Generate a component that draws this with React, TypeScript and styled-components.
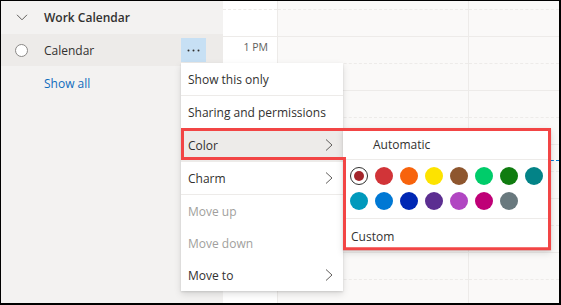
import React from "react";
import styled, { createGlobalStyle } from "styled-components";

const GlobalStyle = createGlobalStyle`
  html, body { margin: 0; padding: 0; background: #ffffff; }
  body { font-family: "Open Sans", "Noto Sans", sans-serif; }
`;

const FONT = `"Open Sans", "Noto Sans", sans-serif`;
const LINE = "#edebe9";

const Frame = styled.div`
  position: relative;
  width: 561px;
  height: 305px;
  box-sizing: border-box;
  border-style: solid;
  border-color: #000;
  border-width: 1px 2px 2px 1px;
  display: flex;
  overflow: hidden;
  font-family: ${FONT};
  color: #323130;
`;

const Sidebar = styled.aside`
  width: 222px;
  flex: none;
  background: #f3f2f1;
  display: flex;
  flex-direction: column;
`;

const GroupHeader = styled.div`
  height: 33px;
  display: flex;
  align-items: center;
  padding-left: 15px;
  font-size: 12px;
  font-weight: 600;
  svg { margin-right: 16px; }
`;

const CalendarRow = styled.div`
  height: 32px;
  display: flex;
  align-items: center;
  padding-left: 14px;
  background: #edebe9;
  font-size: 12px;
`;

const Radio = styled.span`
  width: 13px;
  height: 13px;
  box-sizing: border-box;
  border-radius: 50%;
  border: 1px solid #8a8886;
  background: #ffffff;
  margin-right: 16px;
`;

const MoreButton = styled.span`
  margin-left: auto;
  margin-right: 17px;
  width: 25px;
  height: 24px;
  background: #c7e0f4;
  display: flex;
  align-items: center;
  justify-content: center;
`;

const ShowAll = styled.div`
  height: 35px;
  display: flex;
  align-items: center;
  padding-left: 43px;
  font-size: 12px;
  color: #0f6cbd;
`;

const TimeColumn = styled.div`
  width: 55px;
  flex: none;
  box-sizing: border-box;
  border-right: 1px solid ${LINE};
  background: #ffffff;
  display: flex;
  flex-direction: column;
`;

const DayGrid = styled.div`
  flex: 1;
  display: flex;
  background: #faf9f8;
`;

const DayColumn = styled.div<{ $w?: number }>`
  position: relative;
  display: flex;
  flex-direction: column;
  box-sizing: border-box;
  ${(p) => (p.$w ? `width: ${p.$w}px; flex: none; border-right: 1px solid ${LINE};` : `flex: 1;`)}
`;

const Slot = styled.div<{ $h: number; $kind: "solid" | "dashed" }>`
  height: ${(p) => p.$h}px;
  flex: none;
  box-sizing: border-box;
  border-bottom: 1px ${(p) => p.$kind} ${LINE};
  display: flex;
  justify-content: flex-end;
  align-items: flex-start;
`;

const TimeLabel = styled.span`
  font-size: 10.5px;
  line-height: 14px;
  padding-top: 3px;
  padding-right: 9px;
  color: #605e5c;
`;

const NowMarker = styled.div`
  position: absolute;
  left: 0;
  right: 0;
  top: 159px;
  border-top: 1px dashed #0078d4;
`;

const Menu = styled.div`
  position: absolute;
  left: 180px;
  top: 62px;
  width: 162px;
  background: #ffffff;
  box-shadow: 0 3px 7px rgba(0, 0, 0, 0.13), 0 0.6px 1.8px rgba(0, 0, 0, 0.11);
  display: flex;
  flex-direction: column;
`;

const MenuItem = styled.div<{ $disabled?: boolean; $active?: boolean }>`
  height: 32px;
  display: flex;
  align-items: center;
  justify-content: space-between;
  padding: 0 10px 0 7px;
  font-size: 12px;
  color: ${(p) => (p.$disabled ? "#a19f9d" : "#323130")};
  background: ${(p) => (p.$active ? "#edebe9" : "#ffffff")};
`;

const Divider = styled.div`
  height: 1px;
  background: ${LINE};
`;

const SubMenu = styled.div`
  position: absolute;
  left: 342px;
  top: 127px;
  width: 208px;
  height: 122px;
  overflow: hidden;
  background: #ffffff;
  box-shadow: 0 3px 7px rgba(0, 0, 0, 0.13), 0 0.6px 1.8px rgba(0, 0, 0, 0.11);
  font-size: 12px;
  display: flex;
  flex-direction: column;
`;

const SubHeader = styled.div`
  height: 32px;
  flex: none;
  box-sizing: border-box;
  border-bottom: 1px solid ${LINE};
  display: flex;
  align-items: center;
  padding: 2px 0 0 30px;
`;

const SwatchGrid = styled.div`
  display: grid;
  grid-template-columns: repeat(8, 18px);
  grid-auto-rows: 18px;
  gap: 7px;
  padding: 7px 0 8px 7px;
  border-bottom: 1px solid ${LINE};
`;

const Swatch = styled.span<{ $c: string; $selected?: boolean }>`
  width: 18px;
  height: 18px;
  box-sizing: border-box;
  border-radius: 50%;
  display: flex;
  align-items: center;
  justify-content: center;
  background: ${(p) => (p.$selected ? "#ffffff" : p.$c)};
  border: ${(p) => (p.$selected ? "1px solid #323130" : "none")};
  &::after {
    content: "";
    display: ${(p) => (p.$selected ? "block" : "none")};
    width: 10px;
    height: 10px;
    border-radius: 50%;
    background: ${(p) => p.$c};
  }
`;

const SubFooter = styled.div`
  height: 34px;
  box-sizing: border-box;
  display: flex;
  align-items: center;
  padding: 4px 0 0 8px;
`;

const Annotation = styled.svg`
  position: absolute;
  left: 0;
  top: 0;
  pointer-events: none;
`;

const ChevronDown = () => (
  <svg width="12" height="7" viewBox="0 0 12 7">
    <path d="M1 0.8 L6 5.8 L11 0.8" fill="none" stroke="#605e5c" strokeWidth="1" />
  </svg>
);

const ChevronRight = () => (
  <svg width="8" height="12" viewBox="0 0 8 12">
    <path d="M1 0.5 L7 6 L1 11.5" fill="none" stroke="#605e5c" strokeWidth="1" />
  </svg>
);

const Dots = () => (
  <svg width="13" height="3" viewBox="0 0 13 3">
    <circle cx="1.5" cy="1.5" r="1" fill="#323130" />
    <circle cx="6.5" cy="1.5" r="1" fill="#323130" />
    <circle cx="11.5" cy="1.5" r="1" fill="#323130" />
  </svg>
);

const slots: { h: number; kind: "solid" | "dashed" }[] = [
  { h: 9, kind: "dashed" },
  ...Array.from({ length: 11 }, (_, i) => ({ h: 27, kind: (i % 2 === 0 ? "solid" : "dashed") as "solid" | "dashed" })),
];

const Slots = ({ label }: { label?: string }) => (
  <>
    {slots.map((s, i) => (
      <Slot key={i} $h={s.h} $kind={s.kind}>
        {label && i === 2 ? <TimeLabel>{label}</TimeLabel> : null}
      </Slot>
    ))}
  </>
);

const row1 = ["#a4262c", "#d13438", "#f7630c", "#fde300", "#8e562e", "#00cc6a", "#107c10", "#038387"];
const row2 = ["#0099bc", "#0078d4", "#0027b4", "#5c2e91", "#b146c2", "#bf0077", "#69797e"];

type Item = { label: string; disabled?: boolean; active?: boolean; sub?: boolean; divider?: boolean };
const items: Item[] = [
  { label: "Show this only", divider: true },
  { label: "Sharing and permissions", divider: true },
  { label: "Color", active: true, sub: true, divider: true },
  { label: "Charm", sub: true, divider: true },
  { label: "Move up", disabled: true },
  { label: "Move down", disabled: true },
  { label: "Move to", sub: true },
];

export default function App() {
  return (
    <>
      <GlobalStyle />
      <Frame>
        <Sidebar>
          <GroupHeader>
            <ChevronDown />
            Work Calendar
          </GroupHeader>
          <CalendarRow>
            <Radio />
            Calendar
            <MoreButton>
              <Dots />
            </MoreButton>
          </CalendarRow>
          <ShowAll>Show all</ShowAll>
        </Sidebar>
        <TimeColumn>
          <Slots label="1 PM" />
        </TimeColumn>
        <DayGrid>
          <DayColumn $w={191}>
            <Slots />
          </DayColumn>
          <DayColumn>
            <Slots />
            <NowMarker />
          </DayColumn>
        </DayGrid>

        <Menu>
          {items.map((it) => (
            <React.Fragment key={it.label}>
              <MenuItem $disabled={it.disabled} $active={it.active}>
                <span>{it.label}</span>
                {it.sub ? <ChevronRight /> : null}
              </MenuItem>
              {it.divider ? <Divider /> : null}
            </React.Fragment>
          ))}
        </Menu>

        <SubMenu>
          <SubHeader>Automatic</SubHeader>
          <SwatchGrid>
            {row1.map((c, i) => (
              <Swatch key={c} $c={c} $selected={i === 0} />
            ))}
            {row2.map((c) => (
              <Swatch key={c} $c={c} />
            ))}
          </SwatchGrid>
          <SubFooter>Custom</SubFooter>
        </SubMenu>

        <Annotation width="558" height="302" viewBox="0 0 558 302">
          <path
            d="M181.5 128.5 H548.5 V247.75 H343.5 V157.5 H181.5 Z"
            fill="none"
            stroke="#f24545"
            strokeWidth="3"
          />
        </Annotation>
      </Frame>
    </>
  );
}
